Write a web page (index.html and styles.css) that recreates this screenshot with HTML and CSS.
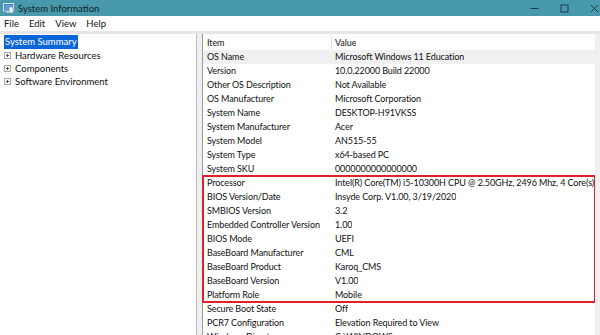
FILE: index.html
```html
<!DOCTYPE html>
<html>
<head>
<meta charset="utf-8">
<link rel="stylesheet" href="styles.css">
</head>
<body>
<div class="window">
  <div class="titlebar">
    <svg class="appicon" width="11" height="11" viewBox="0 0 11 11">
      <rect x="0.5" y="0.5" width="10" height="7.5" fill="#2b6fb8" stroke="#d8e4ef" stroke-width="1"/>
      <rect x="1.5" y="1.5" width="8" height="5.5" fill="#5aa0de"/>
      <rect x="3.5" y="8.5" width="4" height="1.5" fill="#cfd8e0"/>
      <rect x="6" y="4" width="4" height="6" fill="#e8eef3" stroke="#7a8a99" stroke-width="0.6"/>
    </svg>
    <span class="title">System Information</span>
    <div class="controls">
      <span class="ctl"><svg width="9" height="9" viewBox="0 0 9 9"><line x1="0.5" y1="4.5" x2="8.5" y2="4.5" stroke="#1a3a44" stroke-width="1"/></svg></span>
      <span class="ctl"><svg width="9" height="9" viewBox="0 0 9 9"><rect x="1" y="1" width="7" height="7" fill="none" stroke="#1a3a44" stroke-width="1"/></svg></span>
      <span class="ctl"><svg width="9" height="9" viewBox="0 0 9 9"><path d="M1 1L8 8M8 1L1 8" stroke="#1a3a44" stroke-width="1"/></svg></span>
    </div>
  </div>
  <div class="menubar">
    <span>File</span><span>Edit</span><span>View</span><span>Help</span>
  </div>
  <div class="main">
    <div class="tree">
      <div class="node selected"><span class="sel">System Summary</span></div>
      <div class="node child"><span class="exp"></span><span>Hardware Resources</span></div>
      <div class="node child"><span class="exp"></span><span>Components</span></div>
      <div class="node child"><span class="exp"></span><span>Software Environment</span></div>
    </div>
    <div class="splitter"></div>
    <div class="list">
      <div class="row head"><span class="c1">Item</span><span class="c2">Value</span></div>
      <div class="row hl"><span class="c1">OS Name</span><span class="c2">Microsoft Windows 11 Education</span></div>
      <div class="row"><span class="c1">Version</span><span class="c2">10.0.22000 Build 22000</span></div>
      <div class="row"><span class="c1">Other OS Description</span><span class="c2">Not Available</span></div>
      <div class="row"><span class="c1">OS Manufacturer</span><span class="c2">Microsoft Corporation</span></div>
      <div class="row"><span class="c1">System Name</span><span class="c2">DESKTOP-H91VKSS</span></div>
      <div class="row"><span class="c1">System Manufacturer</span><span class="c2">Acer</span></div>
      <div class="row"><span class="c1">System Model</span><span class="c2">AN515-55</span></div>
      <div class="row"><span class="c1">System Type</span><span class="c2">x64-based PC</span></div>
      <div class="row"><span class="c1">System SKU</span><span class="c2">0000000000000000</span></div>
      <div class="group">
        <div class="row"><span class="c1">Processor</span><span class="c2">Intel(R) Core(TM) i5-10300H CPU @ 2.50GHz, 2496 Mhz, 4 Core(s)</span></div>
        <div class="row"><span class="c1">BIOS Version/Date</span><span class="c2">Insyde Corp. V1.00, 3/19/2020</span></div>
        <div class="row"><span class="c1">SMBIOS Version</span><span class="c2">3.2</span></div>
        <div class="row"><span class="c1">Embedded Controller Version</span><span class="c2">1.00</span></div>
        <div class="row"><span class="c1">BIOS Mode</span><span class="c2">UEFI</span></div>
        <div class="row"><span class="c1">BaseBoard Manufacturer</span><span class="c2">CML</span></div>
        <div class="row"><span class="c1">BaseBoard Product</span><span class="c2">Karoq_CMS</span></div>
        <div class="row"><span class="c1">BaseBoard Version</span><span class="c2">V1.00</span></div>
        <div class="row"><span class="c1">Platform Role</span><span class="c2">Mobile</span></div>
      </div>
      <div class="row"><span class="c1">Secure Boot State</span><span class="c2">Off</span></div>
      <div class="row"><span class="c1">PCR7 Configuration</span><span class="c2">Elevation Required to View</span></div>
      <div class="row"><span class="c1">Windows Directory</span><span class="c2">C:\WINDOWS</span></div>
    </div>
    <div class="vscroll"></div>
  </div>
</div>
</body>
</html>
```
FILE: styles.css
```css
html, body {
  margin: 0;
  padding: 0;
  width: 600px;
  height: 335px;
  overflow: hidden;
  background: #ffffff;
}
body {
  font-family: "Lato", "Open Sans", sans-serif;
  font-size: 9px;
  color: #111111;
}
.window {
  display: flex;
  flex-direction: column;
  height: 335px;
  overflow: hidden;
}
.titlebar {
  height: 16px;
  background: #4799ab;
  display: flex;
  align-items: center;
  padding-left: 3px;
  flex-shrink: 0;
  overflow: hidden;
}
.appicon {
  margin-right: 4px;
}
.title {
  color: #0e2228;
  font-size: 9.5px;
}
.controls {
  margin-left: auto;
  margin-right: -9px;
  display: flex;
  height: 16px;
}
.ctl {
  width: 30px;
  display: flex;
  align-items: center;
  justify-content: center;
}
.menubar {
  height: 15px;
  display: flex;
  align-items: center;
  gap: 10px;
  padding-left: 4px;
  flex-shrink: 0;
  border-bottom: 3px solid #e6e6e6;
  font-size: 9.5px;
}
.main {
  flex: 1;
  display: flex;
  min-height: 0;
}
.tree {
  width: 196px;
  border-right: 1px solid #bdbdbd;
  padding-top: 1px;
  flex-shrink: 0;
  font-size: 9.5px;
}
.node {
  height: 13px;
  line-height: 13px;
  display: flex;
  align-items: center;
  white-space: nowrap;
}
.node.selected {
  height: 14px;
  padding-left: 4px;
}
.sel {
  background: #0a66d8;
  color: #ffffff;
  padding: 0 1px;
  line-height: 14px;
}
.node.child {
  padding-left: 4px;
}
.exp {
  width: 5px;
  height: 5px;
  border: 1px solid #a6a6a6;
  margin-right: 4px;
  position: relative;
  background: #fff;
}
.exp::before {
  content: "";
  position: absolute;
  left: 1px;
  top: 2px;
  width: 3px;
  height: 1px;
  background: #555;
}
.exp::after {
  content: "";
  position: absolute;
  left: 2px;
  top: 1px;
  width: 1px;
  height: 3px;
  background: #555;
}
.splitter {
  width: 5px;
  background: #efefef;
  border-right: 1px solid #9c9c9c;
  flex-shrink: 0;
}
.list {
  flex: 1;
  padding-top: 2px;
  min-width: 0;
  letter-spacing: -0.1px;
}
.row {
  height: 14px;
  line-height: 14px;
  display: flex;
  white-space: nowrap;
}
.row.hl {
  background: #f0f0f0;
}
.c1 {
  width: 125px;
  padding-left: 4px;
  flex-shrink: 0;
}
.head .c1 {
  border-right: 1px solid #e3e3e3;
  width: 124px;
}
.c2 {
  padding-left: 3px;
  overflow: hidden;
}
.group {
  outline: 2px solid #e0212b;
  outline-offset: -1px;
}
.vscroll {
  width: 5px;
  background: #f0f0f0;
  flex-shrink: 0;
}
```
